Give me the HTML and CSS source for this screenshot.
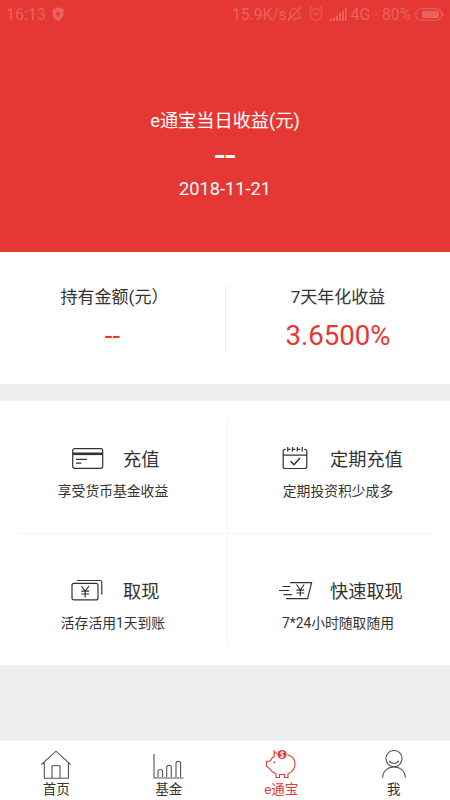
FILE: index.html
```html
<!DOCTYPE html>
<html lang="zh-CN">
<head>
<meta charset="utf-8">
<title>e通宝</title>
<link rel="stylesheet" href="styles.css">
</head>
<body>
<header class="hero">
  <div class="status">
    <span class="clock">16:13</span>
    <svg class="shield" width="12" height="14" viewBox="0 0 12 14"><path fill="currentColor" fill-rule="evenodd" d="M6 0.3 11.5 2.2V7.5C11.5 10.5 9 12.5 6 13.7 3 12.5.5 10.5.5 7.5V2.2ZM6.8 3 3.3 7.5H5.5L5 10.7 8.7 6.1H6.4Z"/></svg>
    <span class="speed">15.9K/s</span>
    <svg class="bell" width="16" height="16" viewBox="0 0 16 16"><path class="line" d="M3.5 11V7C3.5 4 5 2.8 7.5 2.8c1.3 0 2.3.4 3 1.2M12 6v5l1.5 1.5H6M1 12.5h2M6.5 14h3M1 14.5 14.5 1"/></svg>
    <svg class="alarm" width="16" height="16" viewBox="0 0 16 16"><circle class="line" cx="8" cy="8.5" r="5.8"/><path class="line" d="M5.5 7 8 9.3 10.5 7M1 4 4 1.2M12 1.2 15 4"/></svg>
    <svg class="signal" width="17" height="13" viewBox="0 0 17 13"><path fill="currentColor" d="M0 11h2v2H0zM3 9.5h2V13H3zM6 7.5h2V13H6zM9 5h2v8H9zM12 2.5h2V13h-2zM15 0h1.5v13H15z"/></svg>
    <span class="network">4G</span>
    <svg class="updown" width="5" height="6" viewBox="0 0 5 6"><path class="line" d="M1 1v4M4 1v4"/></svg>
    <span class="percent">80%</span>
    <svg class="battery" width="29" height="13" viewBox="0 0 29 13"><rect class="line" x=".7" y=".7" width="26" height="11.6" rx="5.5"/><rect x="7" y="3" width="17" height="7" rx="1" fill="currentColor"/><path class="line" d="M28 5v3"/></svg>
  </div>
  <div class="hero-title">e通宝当日收益(元)</div>
  <div class="hero-value">--</div>
  <div class="hero-date">2018-11-21</div>
</header>
<section class="stats">
  <div class="stat"><div class="stat-label wide">持有金额(元）</div><div class="stat-value">--</div></div>
  <div class="stat"><div class="stat-label">7天年化收益</div><div class="stat-value">3.6500%</div></div>
</section>
<main class="actions">
  <div class="action">
    <div class="action-head">
      <svg class="action-icon" width="34" height="26" viewBox="0 0 34 26"><rect x="1.7" y="2.7" width="30" height="19.6" rx="2"/><path d="M2 7.8h30" stroke-width="2.6"/><path d="M5 13.3h11M5 17.2h5.5"/></svg>
      <span>充值</span>
    </div>
    <div class="action-note">享受货币基金收益</div>
  </div>
  <div class="action">
    <div class="action-head">
      <svg class="action-icon" width="34" height="26" viewBox="0 0 34 26"><path d="M3.7 3.4H3.2Q1.2 3.4 1.2 5.4V20.5Q1.2 22.5 3.2 22.5H22.8Q24.8 22.5 24.8 20.5V5.4Q24.8 3.4 22.8 3.4H22.2M1.2 9.2H24.8M5.7 3.4H8.5M10.5 3.4H13.3M15.3 3.4H18.2M5.7 1v4.5M10.5 1v4.5M15.3 1v4.5M20.2 1v4.5"/><path d="M8.5 15.2 12 18.7 18 12" stroke-width="1.6"/></svg>
      <span>定期充值</span>
    </div>
    <div class="action-note">定期投资积少成多</div>
  </div>
  <div class="action">
    <div class="action-head">
      <svg class="action-icon" width="34" height="26" viewBox="0 0 34 26"><rect x="1" y="5.4" width="26" height="16.5" rx="2"/><path d="M6.2 2.5H28.8Q30.8 2.5 30.8 4.5V16.5"/><path d="M10.4 8 14.2 13 18 8M14.2 13V19.5M10.3 13.2H18.1M10.3 16H18.1"/></svg>
      <span>取现</span>
    </div>
    <div class="action-note">活存活用1天到账</div>
  </div>
  <div class="action">
    <div class="action-head">
      <svg class="action-icon fast" width="34" height="26" viewBox="0 0 34 26"><path d="M11 4.6H32.6L28.6 20.7H7M3.5 8.5H11.5M0 12.5H10M4.5 16.7H13"/><path d="M17.5 6.5 21.3 12 25.1 6.5M21.3 12V18M17.4 12.2H25.2M17.4 15H25.2"/></svg>
      <span>快速取现</span>
    </div>
    <div class="action-note">7*24小时随取随用</div>
  </div>
</main>
<nav class="tabs">
  <a class="tab">
    <svg width="34" height="30" viewBox="0 0 34 30"><path d="M2.2 14.7 17 1.2 31.8 14.7M5.3 12V28.2H29.4V12M13 28V15.7H21V28"/></svg>
    <span>首页</span>
  </a>
  <a class="tab">
    <svg width="34" height="30" viewBox="0 0 34 30"><path d="M2 4V28H31.5M6 27V21.5Q6 19.5 8.3 19.5T10.6 21.5V27M14.7 27V17.5Q14.7 15.3 17 15.3T19.3 17.5V27M24 27V13.5Q24 11.3 26.3 11.3T28.6 13.5V27"/></svg>
    <span>基金</span>
  </a>
  <a class="tab active">
    <svg width="34" height="30" viewBox="0 0 34 30"><path d="M13 3.6Q11.5 3.2 10.2 1.2V6.5Q7.5 8 6 11.3H2.5V16.2L5.5 18.5Q7.5 22 12 24V27.5H15.5V24.5H20.5V27.5H24V24Q31 20.5 31 14 31 7 23.5 4.8"/><circle class="coin" cx="18" cy="4.6" r="4.6"/><path class="coin-mark" d="M20.2 2.6Q16.5 1 16.3 3.3C16.1 4.8 20.2 4.4 20 6.3Q19.5 8.2 15.8 6.8M18 .8V8.5"/><path d="M9.5 12.4h1.6" stroke-width="1.6"/></svg>
    <span>e通宝</span>
  </a>
  <a class="tab">
    <svg width="34" height="30" viewBox="0 0 34 30"><circle cx="17" cy="8.6" r="8.1"/><path d="M12 11Q17 16 22 11M5.7 27.8C5.7 13.2 28.3 13.2 28.3 27.8"/></svg>
    <span>我</span>
  </a>
</nav>
</body>
</html>
```

FILE: styles.css
```css
* { box-sizing: border-box; }
body {
  margin: 0;
  height: 800px;
  display: flex;
  flex-direction: column;
  background: #eee;
  color: #333;
  font-family: Roboto, "Noto Sans CJK SC", sans-serif;
}
svg { display: block; flex: none; }
.hero {
  height: 252px;
  background: #e53834;
  color: #fff;
  text-align: center;
}
.status {
  height: 28px;
  padding-left: 6px;
  display: flex;
  align-items: center;
  color: #ea615d;
  font-size: 16px;
  white-space: nowrap;
}
.line { fill: none; stroke: currentColor; stroke-width: 1.1; }
.clock { width: 46px; text-align: left; }
.speed { margin-left: 168px; width: 54px; text-align: left; font-size: 15.6px; line-height: 20px; padding-top: 1px; }
.bell { margin-left: 1px; }
.alarm { margin-left: 5px; }
.signal { margin-left: 6px; }
.network { margin-left: 3px; width: 21px; }
.updown { margin-left: 1px; opacity: .5; }
.percent { margin-left: 4px; width: 31px; font-size: 15.6px; line-height: 20px; padding-top: 1px; }
.battery { margin-left: 3px; }
.hero-title { margin-top: 79px; font-size: 18.2px; line-height: 28px; }
.hero-value { font-size: 38px; line-height: 40px; height: 40px; }
.hero-date { font-size: 18.2px; line-height: 28px; }
.stats {
  height: 132px;
  display: grid;
  grid-template-columns: 1fr 1fr;
  padding: 34px 0 32px;
  background: #fff;
  text-align: center;
}
.stat + .stat { border-left: 1px solid #ececec; }
.stat-label { font-size: 17px; line-height: 22px; }
.stat-label.wide { padding-left: 4px; }
.stat-value { margin-top: 11px; font-size: 27.6px; line-height: 34px; color: #e53834; }
.actions {
  height: 264px;
  margin-top: 17px;
  padding: 17px 17px 18px;
  display: grid;
  grid-template-columns: 211px 1fr;
  grid-template-rows: 116px 113px;
  background: #fff;
}
.action { padding-top: 26px; }
.action:nth-child(odd) { border-right: 1px solid #f3f3f3; }
.action:nth-child(-n+2) { border-bottom: 1px solid #f3f3f3; }
.action:nth-child(n+3) { padding-top: 42px; }
.action-head { display: flex; align-items: center; font-size: 18.2px; line-height: 30px; }
.action-head span { padding-top: 1px; margin-bottom: -1px; }
.action:nth-child(odd) .action-head { padding-left: 54px; gap: 18px; }
.action:nth-child(even) .action-head { padding-left: 54px; gap: 14px; }
.action-icon { fill: none; stroke: #333; stroke-width: 1.2; }
.action-icon.fast { margin: 0 3px 0 -3px; }
.action-note { margin-top: 7px; font-size: 13.8px; line-height: 20px; text-align: center; }
.action:nth-child(odd) .action-note { padding-right: 18px; }
.action:nth-child(even) .action-note { padding-left: 15px; }
.tabs {
  height: 59px;
  margin-top: auto;
  display: grid;
  grid-template-columns: repeat(4, 1fr);
  background: #fff;
}
.tab {
  display: flex;
  flex-direction: column;
  align-items: center;
  padding-top: 9px;
  font-size: 13.5px;
  line-height: 18px;
}
.tab svg { fill: none; stroke: #555; stroke-width: 1.1; }
.active { color: #e53834; }
.active svg { stroke: #e53834; }
.active .coin { fill: #e53834; stroke: none; }
.active .coin-mark { stroke: #fff; stroke-width: 1; }
```
